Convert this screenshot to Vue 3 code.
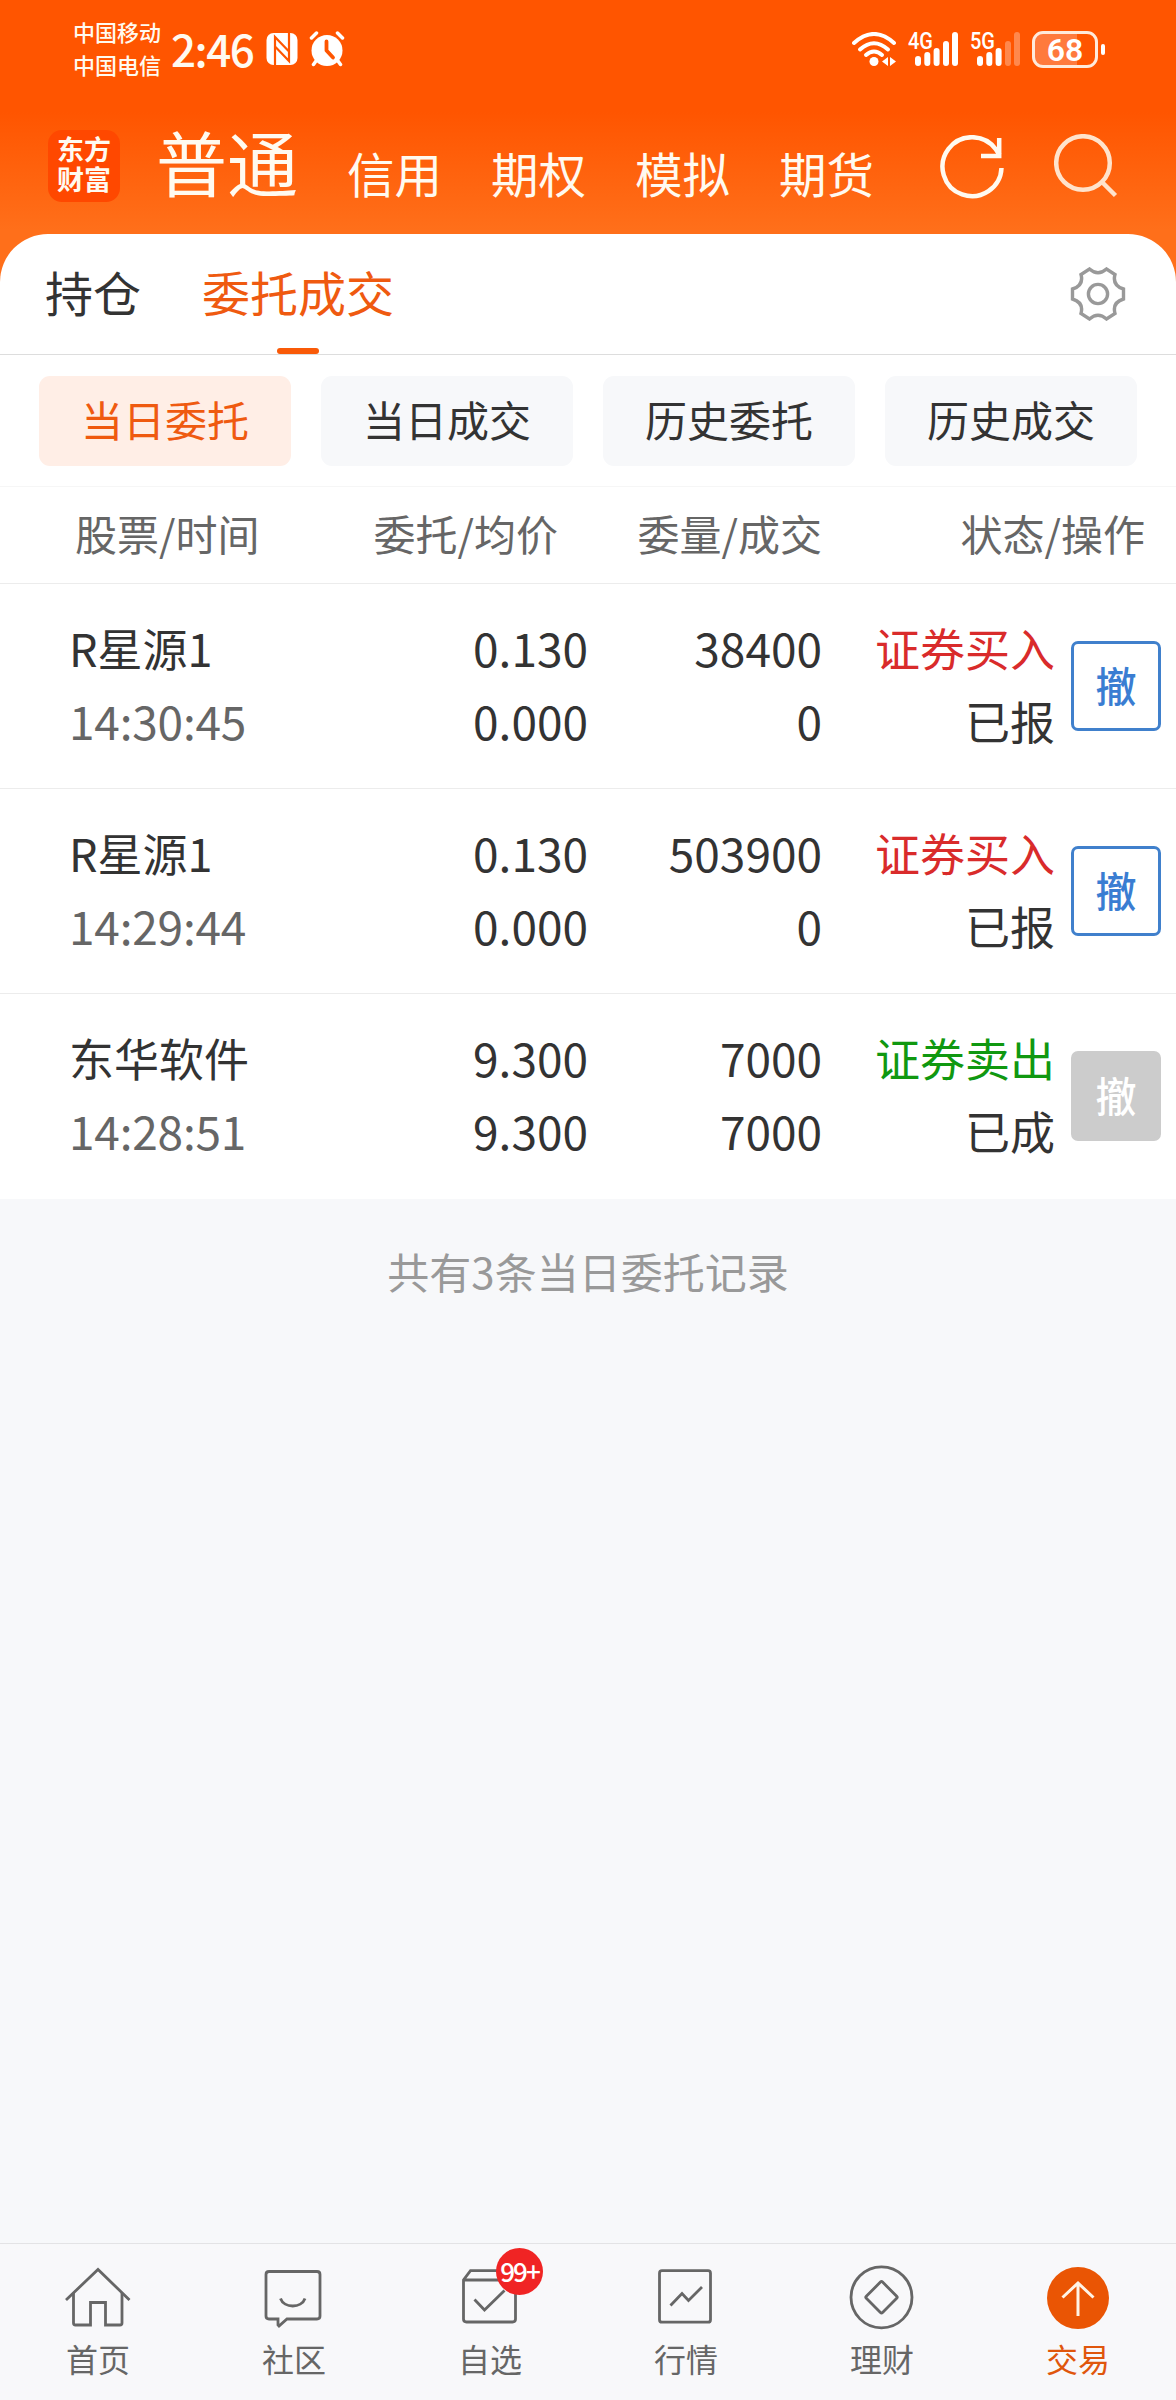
<script setup>
import { ref } from 'vue'

const accounts = ['普通', '信用', '期权', '模拟', '期货']
const activeAccount = ref('普通')

const tabs = ['持仓', '委托成交']
const activeTab = ref('委托成交')

const filters = ['当日委托', '当日成交', '历史委托', '历史成交']
const activeFilter = ref('当日委托')

// Order list
const orders = ref([
  { name: 'R星源1', time: '14:30:45', price: '0.130', avg: '0.000', qty: '38400', filled: '0', side: 'buy', state: '已报', open: true },
  { name: 'R星源1', time: '14:29:44', price: '0.130', avg: '0.000', qty: '503900', filled: '0', side: 'buy', state: '已报', open: true },
  { name: '东华软件', time: '14:28:51', price: '9.300', avg: '9.300', qty: '7000', filled: '7000', side: 'sell', state: '已成', open: false }
])

// Signal bars: x, top
const bars = [[7, 24], [16.3, 20], [25.6, 16], [35, 9], [44, 0]]
const signals = [
  { type: '4G', level: 5 },
  { type: '5G', level: 3 }
]

const navItems = [
  { key: 'home', label: '首页' },
  { key: 'community', label: '社区' },
  { key: 'watch', label: '自选', badge: '99+' },
  { key: 'market', label: '行情' },
  { key: 'wealth', label: '理财' },
  { key: 'trade', label: '交易' }
]
const activeNav = ref('trade')
</script>

<template>
  <div class="page">
    <header class="header">
      <div class="status-bar">
        <div class="carriers">
          <span>中国移动</span>
          <span>中国电信</span>
        </div>
        <span class="clock">2:46</span>
        <svg class="nfc" viewBox="0 0 32 34">
          <rect x="0.5" y="1" width="31" height="32" rx="7" fill="#fff" />
          <path d="M9 33 V5 L22.500 19" stroke="#ff5500" stroke-width="2.200" fill="none" />
          <path d="M23 1 V29 L9.500 15" stroke="#ff5500" stroke-width="2.200" fill="none" />
        </svg>
        <svg class="alarm" viewBox="0 0 36 36">
          <circle cx="18" cy="19.500" r="15.500" fill="#fff" />
          <path d="M2.500 7 L7.500 2 M33.500 7 L28.500 2 M7 30 L4.500 33.500 M29 30 L31.500 33.500" stroke="#fff" stroke-width="3.500" stroke-linecap="round" />
          <path d="M17.500 10.500 V19.500 L24 26.500" stroke="#ff5500" stroke-width="3.800" stroke-linecap="round" stroke-linejoin="round" fill="none" />
        </svg>

        <div class="status-right">
          <svg class="wifi" viewBox="0 0 44 34">
            <path d="M2 11 Q22 -7 42 11" />
            <path d="M8 17.500 Q22 5 36 17.500" />
            <path d="M14 23 Q22 16 30 23" />
            <circle cx="22" cy="29.500" r="4.500" />
            <path class="solid" d="M36 25 V34 L30 29.500 Z M38 25 V34 L44 29.500 Z" />
          </svg>
          <svg v-for="s in signals" :key="s.type" class="signal" viewBox="0 0 51 34">
            <text x="0" y="17" textLength="25" lengthAdjust="spacingAndGlyphs">{{ s.type }}</text>
            <rect
              v-for="(b, i) in bars"
              :key="i"
              :x="b[0]"
              :y="b[1]"
              width="6"
              :height="34 - b[1]"
              rx="3"
              :opacity="i < s.level ? 1 : 0.3"
            />
          </svg>
          <div class="battery"><span>68</span></div>
          <i class="battery-tip"></i>
        </div>
      </div>

      <div class="account-bar">
        <div class="logo">
          <span>东方</span>
          <span>财富</span>
        </div>
        <nav class="accounts">
          <span
            v-for="a in accounts"
            :key="a"
            :class="{ active: a === activeAccount }"
            @click="activeAccount = a"
          >{{ a }}</span>
        </nav>
        <svg class="refresh" viewBox="0 0 64 64">
          <path d="M61.500 33 A29.500 29.500 0 1 1 56 14.500 L59.500 20" />
          <path d="M59.200 3 V21 H41" />
        </svg>
        <svg class="search" viewBox="0 0 64 64">
          <circle cx="29" cy="29" r="26.800" />
          <path d="M48 48 L61.500 61.500" />
        </svg>
      </div>
    </header>

    <main class="sheet">
      <div class="tabs">
        <span
          v-for="t in tabs"
          :key="t"
          class="tab"
          :class="{ active: t === activeTab }"
          @click="activeTab = t"
        >{{ t }}</span>
        <svg class="gear" viewBox="0 0 56 54">
          <path d="M19.500 2 Q28 9.500 36.500 2 L45 7.500 Q42 18.500 53.500 22 V32 Q42 35.500 45 46.500 L36.500 52 Q28 44.500 19.500 52 L11 46.500 Q14 35.500 2.500 32 V22 Q14 18.500 11 7.500 Z" />
          <circle cx="28" cy="27" r="9.600" />
        </svg>
      </div>

      <div class="filters">
        <button
          v-for="f in filters"
          :key="f"
          :class="{ active: f === activeFilter }"
          @click="activeFilter = f"
        >{{ f }}</button>
      </div>

      <div class="row table-head">
        <span class="col-name">股票/时间</span>
        <span class="col-price">委托/均价</span>
        <span class="col-qty">委量/成交</span>
        <span class="col-action">状态/操作</span>
      </div>

      <div v-for="o in orders" :key="o.time" class="row order">
        <div class="col-name">
          <p class="name">{{ o.name }}</p>
          <p class="time">{{ o.time }}</p>
        </div>
        <div class="col-price num">
          <p>{{ o.price }}</p>
          <p>{{ o.avg }}</p>
        </div>
        <div class="col-qty num">
          <p>{{ o.qty }}</p>
          <p>{{ o.filled }}</p>
        </div>
        <div class="col-state">
          <p :class="o.side">{{ o.side === 'buy' ? '证券买入' : '证券卖出' }}</p>
          <p>{{ o.state }}</p>
        </div>
        <button class="cancel" :disabled="!o.open">撤</button>
      </div>
    </main>

    <p class="summary">共有{{ orders.length }}条当日委托记录</p>

    <footer class="nav">
      <div
        v-for="n in navItems"
        :key="n.key"
        class="nav-item"
        :class="{ active: n.key === activeNav }"
        @click="activeNav = n.key"
      >
        <div class="nav-icon">
          <svg viewBox="0 0 72 72">
            <template v-if="n.key === 'home'">
              <path d="M4 38 L36 7.500 L67.500 38" />
              <path d="M11.500 31 V61 Q11.500 63 13.500 63 H28.500 V40.500 H43.500 V63 H58 Q60 63 60 61 V31" />
            </template>
            <template v-else-if="n.key === 'community'">
              <path d="M11 9.500 H59 Q62 9.500 62 12.500 V54 Q62 57 59 57 H29 L21 64 L20 63 V57 H11 Q8 57 8 54 V12.500 Q8 9.500 11 9.500 Z" />
              <path d="M22.500 36.500 C26 46.500 43.500 46.500 47 36.500" />
            </template>
            <template v-else-if="n.key === 'watch'">
              <path d="M9.500 18 H61.500 V57 Q61.500 60 58.500 60 H12.500 Q9.500 60 9.500 57 V18 L16.500 8.700 H55 L61.500 18" />
              <path d="M20.500 37.500 L30.500 48 L50.500 28.500" />
            </template>
            <template v-else-if="n.key === 'market'">
              <rect x="9.500" y="8.700" width="51" height="51.500" rx="2.500" />
              <path d="M20.500 43.500 L32 31.500 L38.500 38.500 L52 25" />
            </template>
            <template v-else-if="n.key === 'wealth'">
              <circle cx="35.500" cy="35.300" r="30.500" />
              <rect x="24" y="23.800" width="23" height="23" rx="1.500" transform="rotate(45 35.500 35.300)" />
            </template>
            <template v-else>
              <circle class="disc" cx="36" cy="36" r="31" />
              <path class="arrow" d="M36 54 V21 M20.500 35.500 L36 21 L51.500 35.500" />
            </template>
          </svg>
          <span v-if="n.badge" class="badge">{{ n.badge }}</span>
        </div>
        <span class="nav-label">{{ n.label }}</span>
      </div>
    </footer>
  </div>
</template>

<style>
body {
  margin: 0;
  background: #f7f8fa;
}
</style>

<style scoped>
.page {
  display: flex;
  flex-direction: column;
  width: 1176px;
  height: 2400px;
  background: #f7f8fa;
  color: #333;
  font-family: "Noto Sans CJK SC", sans-serif;
}
p {
  margin: 0;
}
button {
  font-family: inherit;
  padding: 0;
  border: 0;
}
svg {
  display: block;
  flex: none;
}

.header {
  height: 284px;
  flex: none;
  background: linear-gradient(#ff5500 0, #ff5500 112px, #ff6f1a 230px);
  color: #fffaf0;
}
.status-bar {
  display: flex;
  align-items: center;
  height: 98px;
  padding: 0 71px 0 73px;
}
.carriers {
  display: flex;
  flex-direction: column;
  width: 98px;
  padding-bottom: 3px;
  font-size: 22px;
  font-weight: 500;
  line-height: 33px;
}
.clock {
  width: 95px;
  padding-bottom: 3px;
  font-size: 44px;
  line-height: 60px;
  font-weight: 500;
  letter-spacing: -1.5px;
}
.nfc {
  width: 32px;
  height: 34px;
}
.alarm {
  width: 36px;
  height: 36px;
  margin-left: 11px;
}
.status-right {
  display: flex;
  align-items: center;
  margin-left: auto;
}
.wifi {
  width: 44px;
  height: 34px;
  margin-right: 12px;
  fill: none;
  stroke: #fff;
  stroke-width: 4;
  stroke-linecap: round;
}
.wifi circle, .wifi .solid {
  fill: #fff;
  stroke: none;
}
.signal {
  width: 51px;
  height: 34px;
  margin-right: 11px;
  overflow: visible;
  fill: #fff;
}
.signal text {
  font-family: Roboto, sans-serif;
  font-size: 23px;
  font-weight: 500;
}
.battery {
  box-sizing: border-box;
  width: 66px;
  height: 37px;
  border: 3px solid #ffeadb;
  border-radius: 11px;
  background: linear-gradient(90deg, #ff7a3d 42px, transparent 42px);
  font-family: Roboto, sans-serif;
  font-size: 32px;
  font-weight: 600;
  line-height: 32px;
  text-align: center;
  color: #fff;
}
.battery-tip {
  width: 4px;
  height: 11px;
  margin-left: 3px;
  border-radius: 2px;
  background: #fff;
}

.account-bar {
  display: flex;
  height: 136px;
  padding: 0 57px 0 48px;
}
.logo {
  display: flex;
  flex-direction: column;
  align-items: center;
  width: 72px;
  height: 72px;
  margin-top: 32px;
  box-sizing: border-box;
  padding-top: 4px;
  border-radius: 14px;
  background: #ff4800;
  font-size: 27px;
  font-weight: 700;
  line-height: 30px;
}
.accounts {
  display: flex;
  align-items: baseline;
  gap: 49px;
  margin-left: 36px;
  padding-top: 12px;
  font-size: 47.5px;
  line-height: 100px;
}
.accounts span {
  position: relative;
  top: 2px;
}
.accounts .active {
  top: 0;
  font-size: 71px;
}
.refresh {
  width: 64px;
  height: 64px;
  margin: 37px 0 0 auto;
  fill: none;
  stroke: #fffaf0;
  stroke-width: 4.5;
}
.search {
  width: 64px;
  height: 64px;
  margin: 36px 1px 0 50px;
  fill: none;
  stroke: #ffe3cc;
  stroke-width: 4.5;
}

.sheet {
  flex: none;
  margin-top: -50px;
  border-radius: 48px 48px 0 0;
  background: #fff;
}
.tabs {
  display: flex;
  height: 120px;
  padding: 0 50px 0 45px;
  border-bottom: 1px solid #ddd;
}
.tab {
  display: flex;
  flex-direction: column;
  align-items: center;
  margin-right: 61px;
  font-size: 48px;
  line-height: 114px;
}
.tab.active {
  color: #ef5a10;
}
.tab.active::after {
  content: '';
  width: 42px;
  height: 6px;
  border-radius: 3px;
  background: #f95a08;
}
.gear {
  width: 56px;
  height: 54px;
  margin: 33px 0 0 auto;
  fill: none;
  stroke: #999;
  stroke-width: 3.4;
}
.filters {
  display: flex;
  gap: 30px;
  padding: 21px 39px 20px;
  border-bottom: 1px solid #f6f6f6;
}
.filters button {
  flex: 1;
  height: 90px;
  padding-bottom: 5px;
  border-radius: 11px;
  background: #f7f8fa;
  color: #333;
  font-size: 42px;
}
.filters .active {
  background: #ffeee6;
  color: #ef5a10;
}

.row {
  display: flex;
  align-items: center;
  box-sizing: border-box;
  border-bottom: 1px solid #ececec;
}
.row p, .table-head span {
  position: relative;
  top: -2px;
}
.table-head span {
  top: -3px;
}
.col-name {
  width: 280px;
  padding-left: 69px;
}
.col-price {
  width: 239px;
  text-align: right;
}
.col-qty {
  width: 234px;
  text-align: right;
}
.table-head {
  height: 97px;
  color: #666;
  font-size: 42px;
}
.table-head .col-name {
  width: 275px;
  padding-left: 75px;
}
.table-head .col-price {
  width: 208px;
}
.table-head .col-qty {
  width: 264px;
}
.col-action {
  width: 323px;
  text-align: right;
}
.order {
  height: 205px;
  font-size: 45px;
  line-height: 73px;
}
.order:last-child {
  border-bottom-color: #fff;
}
.time {
  color: #666;
  letter-spacing: -0.2px;
}
.time, .num {
  font-size: 46px;
}
.col-state {
  width: 233px;
  text-align: right;
}
.buy {
  color: #d92b2b;
}
.sell {
  color: #109810;
}
.cancel {
  box-sizing: border-box;
  width: 90px;
  height: 90px;
  margin-left: 16px;
  padding-bottom: 5px;
  border: 3px solid #4080cc;
  border-radius: 7px;
  background: #fff;
  color: #3a7dd2;
  font-size: 41px;
  font-weight: 500;
}
.cancel:disabled {
  border-color: #ccc;
  background: #ccc;
  color: #fff;
}

.summary {
  margin-top: 40px;
  color: #999;
  font-size: 42px;
  line-height: 64px;
  text-align: center;
}

.nav {
  display: flex;
  box-sizing: border-box;
  height: 157px;
  margin-top: auto;
  border-top: 1px solid #e3e3e5;
  background: #f8f8fa;
}
.nav-item {
  display: flex;
  flex: 1;
  flex-direction: column;
  align-items: center;
  padding-top: 18px;
  color: #666;
}
.nav-item.active {
  color: #e0560c;
}
.nav-icon {
  position: relative;
}
.nav-icon svg {
  width: 72px;
  height: 72px;
  fill: none;
  stroke: #666;
  stroke-width: 2.8;
}
.nav-icon .disc {
  fill: #ea5504;
  stroke: none;
}
.nav-icon .arrow {
  stroke: #fff4e6;
  stroke-width: 3;
}
.badge {
  position: absolute;
  top: -14px;
  left: 42px;
  width: 47px;
  height: 47px;
  border-radius: 50%;
  background: #f02424;
  color: #fff;
  font-size: 26px;
  font-weight: 500;
  line-height: 45px;
  letter-spacing: -2px;
  text-align: center;
}
.nav-label {
  font-size: 32px;
  line-height: 48px;
}
</style>
